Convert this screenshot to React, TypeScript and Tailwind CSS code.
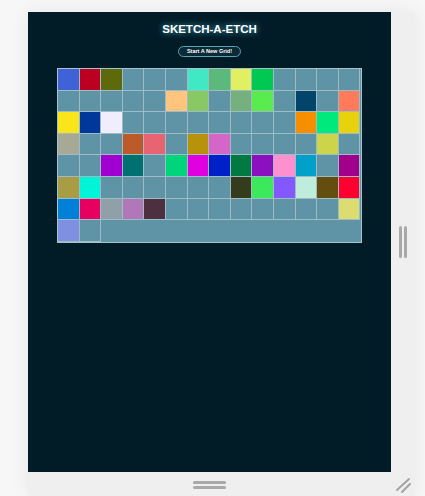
const T = "";

const cells: string[] = [
  "#3f63d6", "#bb0022", "#5c6a0c", T, T, T, "#40e8c3", "#5bb97a", "#e0f060", "#00c853", T, T, T, T,
  T, T, T, T, T, "#ffc57e", "#88c965", T, "#76b07c", "#5aeb4f", T, "#02446a", T, "#ff7b5a",
  "#f9e51a", "#00379b", "#f0eefc", T, T, T, T, T, T, T, T, "#f58f00", "#00e97c", "#e7d30b",
  "#a8a896", T, T, "#bc5a2a", "#e86472", T, "#b8920a", "#d466c8", T, T, T, T, "#ccd44c", T,
  T, T, "#a000d0", "#007070", T, "#00d47c", "#e000e0", "#0020c8", "#007a40", "#8c10c0", "#ff90d0", "#00a0c8", T, "#a0008c",
  "#a89c44", "#00f4d8", T, T, T, T, T, T, "#343c1c", "#3ce85c", "#8458ff", "#c0ecdc", "#634e10", "#ff0030",
  "#0080d8", "#e80060", "#90a0a8", "#b078b8", "#4c3040", T, T, T, T, T, T, T, T, "#dcdc70",
  "#8090e0", T,
];

export default function App() {
  return (
    <div className="w-[425px] h-[496px] bg-[#f7f7f7] pt-[12px] pl-[28px] overflow-hidden font-['Liberation_Sans',Arial,sans-serif]">
      <div className="w-[387px] h-[484px] bg-[#efefef] flex flex-col shadow-[0_0_18px_rgba(0,0,0,0.07)]">
        <div className="flex">
          {/* sketch panel */}
          <div className="w-[363px] h-[460px] bg-[#011c27] flex flex-col items-center">
            <h1 className="mt-[11px] text-[11.5px] leading-[13px] font-bold text-white [text-shadow:0_0_6px_rgba(110,210,240,0.8)]">
              SKETCH-A-ETCH
            </h1>
            <button className="mt-[10px] w-[63px] h-[11px] rounded-full border border-[#5aa3b4] bg-[#0b2a36] text-white text-[5.5px] font-bold leading-none flex items-center justify-center">
              Start A New Grid!
            </button>
            <div className="mt-[11px] w-[305px] border border-[#a7c4ce] bg-[#5f94a6] flex flex-wrap">
              {cells.map((c, i) => (
                <div
                  key={i}
                  className="w-[21.6px] h-[21.6px] border-r border-b border-[#9dbcc6]"
                  style={{ backgroundColor: c || "#5f94a6" }}
                />
              ))}
            </div>
          </div>
          {/* right handle */}
          <div className="w-[24px] flex items-center justify-center">
            <div className="flex gap-[2px]">
              <div className="w-[3px] h-[32px] rounded-full bg-[#a9a9a9]" />
              <div className="w-[3px] h-[32px] rounded-full bg-[#a9a9a9]" />
            </div>
          </div>
        </div>
        {/* bottom handle */}
        <div className="flex h-[24px]">
          <div className="w-[363px] flex items-center justify-center">
            <div className="flex flex-col gap-[2px] mt-[2px]">
              <div className="w-[33px] h-[3px] rounded-full bg-[#a9a9a9]" />
              <div className="w-[33px] h-[3px] rounded-full bg-[#a9a9a9]" />
            </div>
          </div>
          <div className="w-[24px] flex items-center justify-center">
            <svg width="18" height="18" viewBox="0 0 18 18" className="mt-[2px]">
              <line x1="3" y1="14" x2="15" y2="3" stroke="#a3a3a3" strokeWidth="2" strokeLinecap="round" />
              <line x1="8" y1="16" x2="16" y2="8" stroke="#a3a3a3" strokeWidth="2" strokeLinecap="round" />
            </svg>
          </div>
        </div>
      </div>
    </div>
  );
}
